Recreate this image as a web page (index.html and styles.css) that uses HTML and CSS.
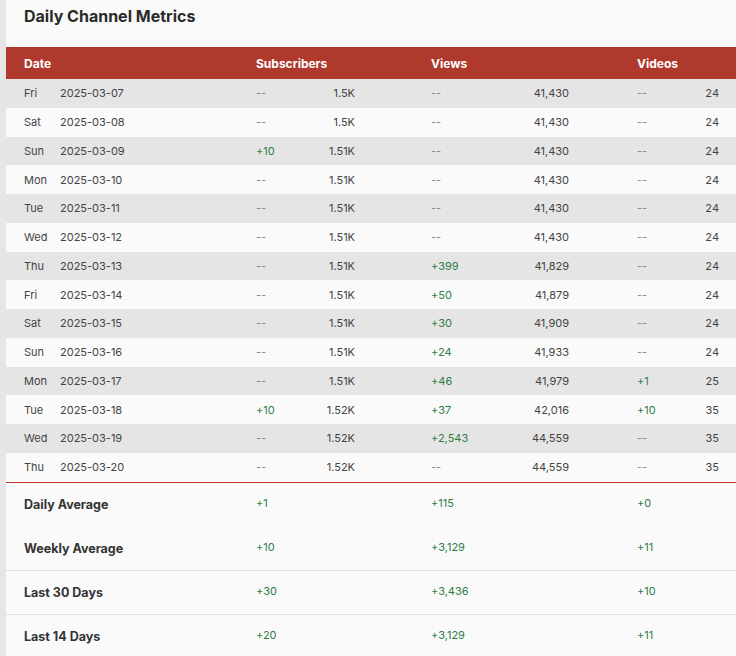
FILE: index.html
```html
<!DOCTYPE html>
<html lang="en">
<head>
<meta charset="utf-8">
<title>Daily Channel Metrics</title>
<link rel="stylesheet" href="styles.css">
</head>
<body>
<div class="page">
  <div class="strip"></div>
  <main class="panel">
    <h1 class="title">Daily Channel Metrics</h1>
    <div class="table">
      <div class="row head">
        <div class="c-date">Date</div>
        <div class="c-m">Subscribers</div>
        <div class="c-m">Views</div>
        <div class="c-m">Videos</div>
      </div>
      <div id="body"></div>
      <div class="summary">
        <div class="srow first"><div class="c-date">Daily Average</div><div class="c-m pos">+1</div><div class="c-m pos">+115</div><div class="c-m pos">+0</div></div>
        <div class="srow"><div class="c-date">Weekly Average</div><div class="c-m pos">+10</div><div class="c-m pos">+3,129</div><div class="c-m pos">+11</div></div>
        <div class="srow"><div class="c-date">Last 30 Days</div><div class="c-m pos">+30</div><div class="c-m pos">+3,436</div><div class="c-m pos">+10</div></div>
        <div class="srow"><div class="c-date">Last 14 Days</div><div class="c-m pos">+20</div><div class="c-m pos">+3,129</div><div class="c-m pos">+11</div></div>
      </div>
    </div>
  </main>
</div>
<script>
const rows = [
  ["Fri","2025-03-07","--","1.5K","--","41,430","--","24"],
  ["Sat","2025-03-08","--","1.5K","--","41,430","--","24"],
  ["Sun","2025-03-09","+10","1.51K","--","41,430","--","24"],
  ["Mon","2025-03-10","--","1.51K","--","41,430","--","24"],
  ["Tue","2025-03-11","--","1.51K","--","41,430","--","24"],
  ["Wed","2025-03-12","--","1.51K","--","41,430","--","24"],
  ["Thu","2025-03-13","--","1.51K","+399","41,829","--","24"],
  ["Fri","2025-03-14","--","1.51K","+50","41,879","--","24"],
  ["Sat","2025-03-15","--","1.51K","+30","41,909","--","24"],
  ["Sun","2025-03-16","--","1.51K","+24","41,933","--","24"],
  ["Mon","2025-03-17","--","1.51K","+46","41,979","+1","25"],
  ["Tue","2025-03-18","+10","1.52K","+37","42,016","+10","35"],
  ["Wed","2025-03-19","--","1.52K","+2,543","44,559","--","35"],
  ["Thu","2025-03-20","--","1.52K","--","44,559","--","35"]
];
const d = (v) => `<span class="${v === '--' ? 'dash' : 'pos'}">${v}</span>`;
document.getElementById('body').innerHTML = rows.map(r => `
  <div class="row data">
    <div class="c-date"><span class="day">${r[0]}</span><span class="dt">${r[1]}</span></div>
    <div class="c-m sub">${d(r[2])}<span class="val">${r[3]}</span></div>
    <div class="c-m views">${d(r[4])}<span class="val">${r[5]}</span></div>
    <div class="c-m vids">${d(r[6])}<span class="val">${r[7]}</span></div>
  </div>`).join('');
</script>
</body>
</html>
```

FILE: styles.css
```css
html, body {
  margin: 0;
  padding: 0;
  background: #fafafa;
  font-family: Inter, "Noto Sans", "Liberation Sans", sans-serif;
  color: #333;
}
.page {
  display: flex;
  min-height: 656px;
  overflow: hidden;
}
.strip {
  width: 6px;
  flex: 0 0 6px;
  background: #e6e6e6;
}
.panel {
  flex: 1;
  min-width: 0;
}
.title {
  margin: 0;
  padding: 5px 18px 0;
  height: 47px;
  box-sizing: border-box;
  font-size: 16px;
  font-weight: 700;
  color: #2a2a2a;
  line-height: 22px;
}
.table {
  width: 731px;
}
.row, .srow {
  display: grid;
  grid-template-columns: 232px 175px 206px 118px;
  align-items: center;
  box-sizing: border-box;
}
.c-date {
  padding-left: 18px;
  display: flex;
}
.c-m {
  padding-left: 18px;
}
.head {
  height: 32px;
  background: #b0392d;
  color: #fff;
  font-size: 12px;
  font-weight: 700;
}
.data {
  height: 28.75px;
  font-size: 11px;
  color: #444;
  background: #fafafa;
}
#body .data:nth-child(odd) {
  background: #e5e5e5;
}
.day {
  width: 36px;
}
.data .c-m {
  display: flex;
  justify-content: space-between;
}
.data .sub { padding-right: 58px; }
.data .views { padding-right: 50px; }
.data .vids { padding-right: 18px; }
.dash { color: #888; }
.pos { color: #2e7d46; }
.val { color: #444; }
.summary {
  border-top: 1px solid #c0392b;
}
.srow {
  height: 44px;
  border-bottom: 1px solid #dedede;
  font-size: 11px;
}
.srow.first {
  border-bottom-color: transparent;
}
.srow .c-date {
  font-weight: 700;
  font-size: 12.5px;
  color: #333;
}
.srow .c-m {
  margin-top: -3px;
}
```
